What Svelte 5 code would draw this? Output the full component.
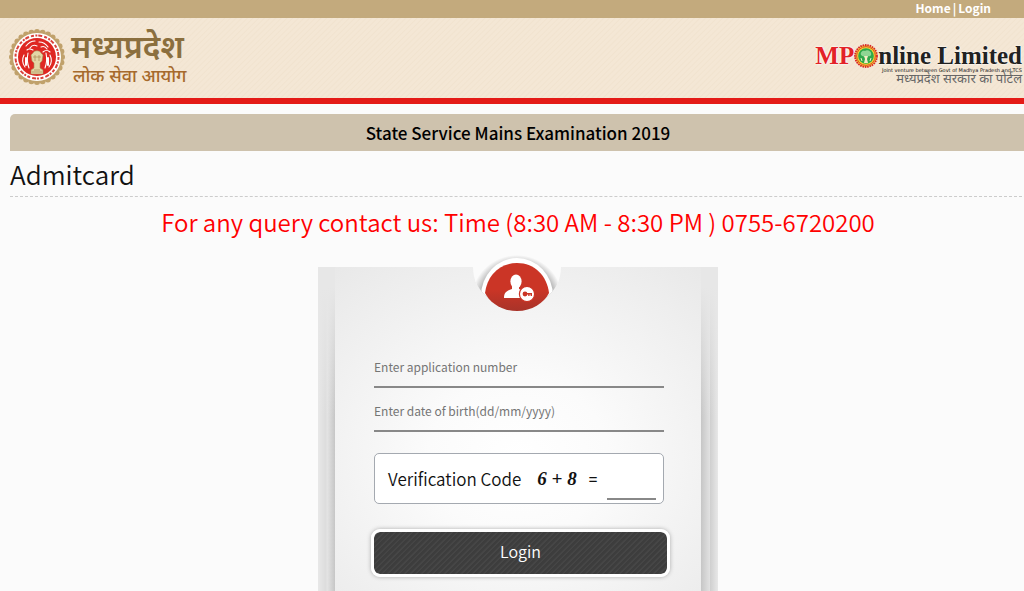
<script>
  const scallops = Array.from({ length: 28 }, (_, i) => {
    const a = (i / 28) * Math.PI * 2
    return { x: 29 + Math.cos(a) * 25, y: 29 + Math.sin(a) * 25 }
  })

  let applicationNo = $state('')
  let dob = $state('')
  let answer = $state('')
</script>

<div class="page">
  <nav class="top-bar">
    <a href="#home">Home</a><span>|</span><a href="#login">Login</a>
  </nav>

  <header class="banner">
    <div class="brand">
      <svg class="emblem" viewBox="0 0 58 58" aria-hidden="true">
        {#each scallops as s}
          <circle cx={s.x} cy={s.y} r="3" fill="#c0a16b" />
        {/each}
        <circle cx="29" cy="29" r="25" fill="#c0a16b" />
        <circle cx="29" cy="29" r="24" fill="#fff" />
        <circle cx="29" cy="29" r="21.5" fill="none" stroke="#d9423b" stroke-width="2" stroke-dasharray="3 1.5 2 1 4 2" />
        <circle cx="29" cy="29" r="19" fill="#df2722" />
        <g fill="none" stroke="#fff" stroke-width="1.1" stroke-linecap="round">
          <path d="M18 18c3-4 6-5 9-5M22 20c2-3 5-3 7-2M31 14c4 0 7 2 9 5M33 19c2-1 4-1 6 2M19 22c2-2 4-1 6 0M35 24c2-2 5-2 7 0" />
          <path d="M16 27c-2 4-2 8 1 12M20 25c-1 5-1 10 1 15M42 27c2 4 2 8-1 12M38 25c1 5 1 10-1 15" />
          <path d="M18 30v7M40 30v7" stroke-width="2" />
        </g>
        <path d="M25 25c1-3 7-3 8 0l2 2-1 6-2 2v5l3 2v4H23v-4l3-2v-5l-2-2-1-6z" fill="#e3d6a6" stroke="#a98b55" stroke-width=".6" />
        <path d="M25 29h8M27 27v6M31 27v6M26 42h6M24 44h10" stroke="#a98b55" stroke-width=".7" />
      </svg>
      <div class="brand-name">
        <span class="brand-state">मध्यप्रदेश</span>
        <span class="brand-sub">लोक सेवा आयोग</span>
      </div>
    </div>

    <div class="partner">
      <div class="partner-name">
        <span class="mp">MP</span>
        <svg class="seal" viewBox="0 0 24 24" aria-hidden="true">
          <circle cx="12" cy="12" r="11" fill="#f5d630" stroke="#d8232a" stroke-width="1.8" stroke-dasharray="1.6 .8" />
          <circle cx="12" cy="12" r="9.4" fill="none" stroke="#d8232a" stroke-width=".8" />
          <circle cx="12" cy="12" r="7.8" fill="#2fa84c" />
          <path d="M7 11c-1-3 2-5 4-4 2-2 6 0 6 2 1 2-1 4-3 3-2 1-5 1-7-1z" fill="#8fd694" />
          <path d="M10 12h4l-1 3 1 4h-4l1-4z" fill="#f6ecc4" />
          <path d="M7 14l1 3M17 14l-1 3" stroke="#f6ecc4" />
        </svg>
        <span>nline Limited</span>
      </div>
      <div class="partner-note">Joint venture between Govt of Madhya Pradesh and TCS</div>
      <div class="partner-hindi">मध्यप्रदेश सरकार का पोर्टल</div>
    </div>
  </header>

  <main>
    <h1 class="exam-title">State Service Mains Examination 2019</h1>
    <h2 class="section-title">Admitcard</h2>
    <p class="contact">For any query contact us: Time (8:30 AM - 8:30 PM ) 0755-6720200</p>

    <div class="card">
      <svg class="badge" viewBox="0 0 96 64" aria-hidden="true">
        <defs>
          <radialGradient id="notch" cx=".5" cy=".5" r=".5">
            <stop offset=".76" stop-color="#a4a4a4" />
            <stop offset=".88" stop-color="#d0d0d0" />
            <stop offset="1" stop-color="#fbfbfb" />
          </radialGradient>
          <linearGradient id="disc" x1="0" y1="0" x2="0" y2="1">
            <stop offset=".55" stop-color="#cb3526" />
            <stop offset="1" stop-color="#a83329" />
          </linearGradient>
          <clipPath id="pocket">
            <path d="M0 0H96V14H92C92 28 86 37 78 44C66 56 30 56 18 44C10 37 4 28 4 14H0Z" />
          </clipPath>
        </defs>
        <g clip-path="url(#pocket)">
          <path d="M4 14H92V64H4Z" fill="#fbfbfb" />
          <ellipse cx="48" cy="48" rx="46" ry="46" fill="url(#notch)" />
          <ellipse cx="48" cy="43" rx="36" ry="38" fill="#fff" />
        </g>
        <path d="M48 10C66 10 78 23 80 40C75 50 63 58 48 58S21 50 16 40C18 23 30 10 48 10Z" fill="url(#disc)" />
        <ellipse cx="47" cy="28.500" rx="5.600" ry="7" fill="#fff" />
        <path d="M43 33v3c-5 2-8 3-8 9h22c0-6-2-7-7-9v-3z" fill="#fff" />
        <circle cx="58" cy="41" r="7.6" fill="#fff" stroke="#cb3526" stroke-width="1.2" />
        <circle cx="56" cy="41" r="2.4" fill="#cb3526" />
        <path d="M57 40h6v3h-1.4v-1.4h-1V43h-1.4v-1.4H57z" fill="#cb3526" />
      </svg>

      <form class="sheet">
        <input class="field" type="text" aria-label="Application number" placeholder="Enter application number" bind:value={applicationNo} />
        <input class="field" type="text" aria-label="Date of birth" placeholder="Enter date of birth(dd/mm/yyyy)" bind:value={dob} />

        <div class="captcha">
          <label for="captcha">Verification Code</label>
          <span class="sum">6 + 8</span>
          <span class="equals">=</span>
          <input id="captcha" type="text" bind:value={answer} />
        </div>

        <button type="submit" class="login">Login</button>
      </form>
    </div>
  </main>
</div>

<style>
  :global(body) {
    margin: 0;
    background: #fbfbfb;
  }

  * {
    box-sizing: border-box;
  }

  .page {
    display: flex;
    flex-direction: column;
    min-height: 100vh;
    overflow-x: hidden;
    font-family: "Noto Sans CJK SC", "Open Sans", "Noto Sans", sans-serif;
    color: #111;
  }

  .top-bar {
    display: flex;
    justify-content: flex-end;
    gap: 2px;
    height: 18px;
    padding-right: 33px;
    background: #c3aa7d;
    color: #fff;
    font: bold 12px/16px "Noto Sans CJK SC", sans-serif;
  }

  .top-bar a {
    color: inherit;
    text-decoration: none;
  }

  .banner {
    display: flex;
    justify-content: space-between;
    height: 86px;
    padding: 10px 2px 0 8px;
    border-bottom: 6px solid #e41b17;
    background: repeating-linear-gradient(135deg, #f4e7d5 0, #f4e7d5 2px, #f1e3cf 3px, #f4e7d5 4px);
  }

  .brand {
    display: flex;
    gap: 5px;
  }

  .emblem {
    width: 58px;
    height: 58px;
  }

  .brand-name {
    display: flex;
    flex-direction: column;
    font-family: "Noto Sans Devanagari", "Noto Sans", sans-serif;
  }

  .brand-state {
    font-size: 32px;
    font-weight: 600;
    line-height: 44px;
    color: #8b6f3e;
  }

  .brand-sub {
    padding-left: 2px;
    font-size: 18px;
    font-weight: 500;
    line-height: 12px;
    color: #a66a2c;
  }

  .partner {
    display: flex;
    flex-direction: column;
    align-items: flex-end;
    padding-top: 15px;
  }

  .partner-name {
    display: flex;
    align-items: center;
    font: bold 25px/25px "Liberation Serif", serif;
    color: #222;
    text-shadow: 0 0 2px #fff, 0 0 2px #fff;
  }

  .mp {
    color: #e32227;
  }

  .seal {
    width: 24px;
    height: 24px;
  }

  .partner-note {
    font: 5px/5px "DejaVu Sans", sans-serif;
  }

  .partner-hindi {
    font: 13px/14px "Noto Sans Devanagari", "Noto Sans", sans-serif;
    color: #666;
  }

  /* the content runs a little past the right edge */
  main {
    display: flex;
    flex: 1;
    flex-direction: column;
    margin-right: -2px;
    padding: 10px 0 0 10px;
  }

  .exam-title {
    margin: 0;
    border-radius: 5px 0 0 0;
    background: #cec2ad;
    font-size: 17px;
    font-weight: 500;
    line-height: 37px;
    text-align: center;
    color: #000;
  }

  .section-title {
    margin: 0 4px 0 0;
    border-bottom: 1px dashed #ccc;
    font-size: 26px;
    font-weight: 350;
    line-height: 45px;
  }

  .contact {
    margin: 0;
    font-size: 24px;
    font-weight: 350;
    line-height: 50px;
    text-align: center;
    color: #f00;
  }

  .card {
    position: relative;
    flex: 1;
    align-self: center;
    width: 400px;
    margin-top: 20px;
    padding: 0 17px;
    background:
      linear-gradient(#e7e7e7 20px, transparent 150px),
      linear-gradient(90deg, #e8e8e8, #dcdcdc 8px, #e4e4e4 9px, #c6c6c6 17px, transparent 17px, transparent 383px, #c6c6c6 383px, #e2e2e2 392px, #cfcfcf 392px, #e8e8e8 400px);
  }

  .badge {
    position: absolute;
    top: -14px;
    left: 151px;
    width: 96px;
    height: 64px;
  }

  .sheet {
    display: flex;
    flex-direction: column;
    height: 100%;
    padding: 81px 34px 14px 39px;
    background: radial-gradient(ellipse 300px 260px at 50% 190px, #fff, #fbfbfb 30%, #e7e7e7);
  }

  .field {
    height: 40px;
    margin: 0 3px 4px 0;
    padding: 0 0 2px;
    border: 0;
    border-bottom: 2px solid #888;
    background: transparent;
    font: 12px "Noto Sans CJK SC", sans-serif;
  }

  .field::placeholder {
    color: #757575;
  }

  .captcha {
    display: flex;
    align-items: center;
    height: 51px;
    margin: 17px 3px 25px 0;
    padding: 0 7px 0 13px;
    border: 1px solid #a4a9b0;
    border-radius: 5px;
    background: #fff;
    font-size: 17px;
    font-weight: 350;
  }

  .sum {
    margin-left: 16px;
    font: italic bold 19px "Liberation Serif", serif;
  }

  .equals {
    margin: 0 auto 0 12px;
    font-size: 15px;
    font-weight: 500;
  }

  .captcha input {
    align-self: flex-end;
    width: 49px;
    height: 30px;
    margin-bottom: 3px;
    padding: 0;
    border: 0;
    border-bottom: 2px solid #888;
    background: transparent;
    font-size: 14px;
  }

  .login {
    height: 48px;
    margin: 0 -3px;
    padding: 0 0 4px;
    border: 3px solid #fff;
    border-radius: 9px;
    box-shadow: 0 0 4px #aaa;
    background: repeating-linear-gradient(135deg, #3d3d3d 0, #3d3d3d 2px, #464646 3px, #464646 4px) padding-box;
    font: 350 16px "Noto Sans CJK SC", sans-serif;
    color: #fff;
  }
</style>
